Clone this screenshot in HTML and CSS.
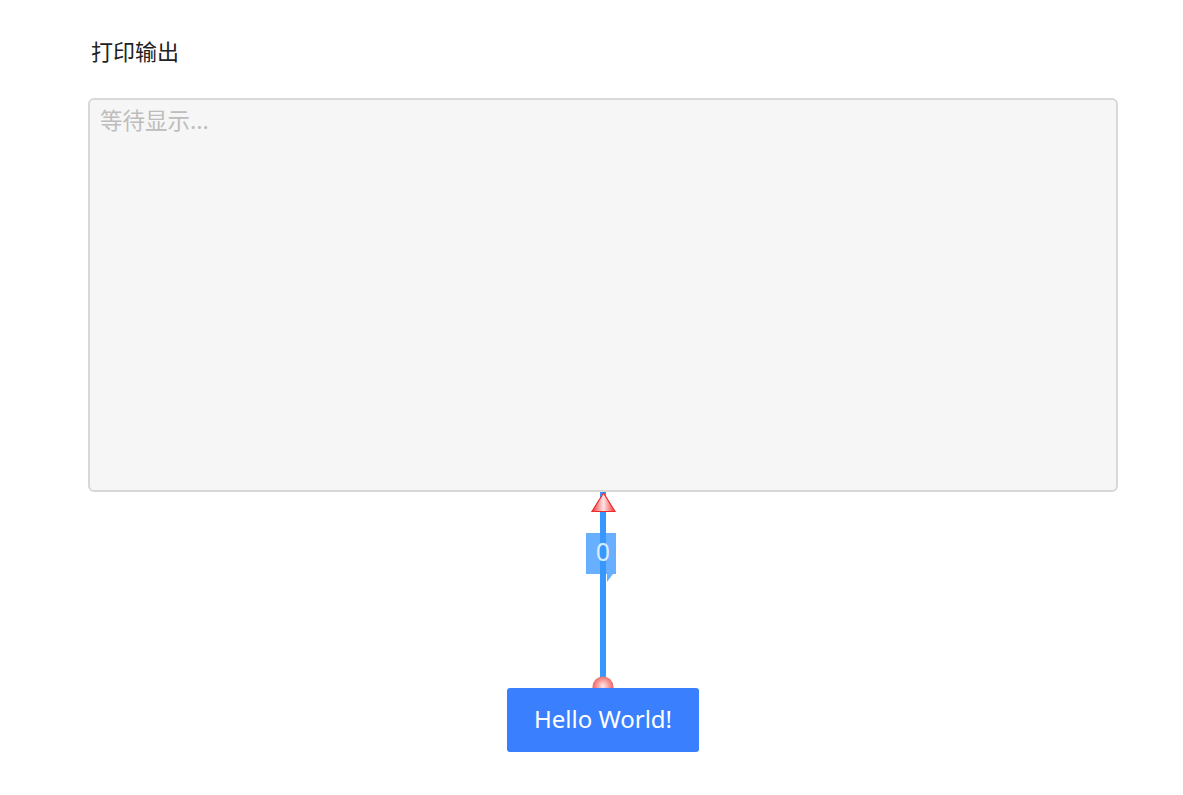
FILE: index.html
```html
<!DOCTYPE html>
<html lang="zh-CN">
<head>
<meta charset="utf-8">
<title>打印输出</title>
<link rel="stylesheet" href="styles.css">
</head>
<body>
<main class="page">
  <h1 class="title">打印输出</h1>
  <textarea class="output" placeholder="等待显示..." readonly></textarea>
  <div class="connector">
    <svg width="40" height="196" viewBox="0 0 40 196" aria-hidden="true">
      <defs>
        <linearGradient id="tri" x1="0" x2="1" y1="0" y2="0">
          <stop offset="0" stop-color="#f23a3a"/>
          <stop offset="0.5" stop-color="#ffe4e4"/>
          <stop offset="1" stop-color="#f23a3a"/>
        </linearGradient>
        <radialGradient id="dot" cx="0.5" cy="0.45" r="0.55">
          <stop offset="0" stop-color="#ffe6e6"/>
          <stop offset="1" stop-color="#ec5656"/>
        </radialGradient>
      </defs>
      <rect x="3" y="41" width="30" height="41" fill="#68b0ff"/>
      <polygon points="24,82 30,82 24,90" fill="#68b0ff"/>
      <rect x="17" y="0" width="6" height="192" fill="#3897ff"/>
      <polygon points="20.5,1 9,19.5 32,19.5" fill="url(#tri)" stroke="#ee2a2a" stroke-width="1.2"/>
      <text x="20" y="69" text-anchor="middle" class="count">0</text>
      <circle cx="20" cy="195" r="10.5" fill="url(#dot)"/>
    </svg>
  </div>
  <div class="actions">
    <button class="hello" type="button">Hello World!</button>
  </div>
</main>
</body>
</html>
```

FILE: styles.css
```css
html, body {
  margin: 0;
  padding: 0;
  background: #ffffff;
}

body {
  font-family: "Noto Sans", "Noto Sans CJK SC", sans-serif;
}

.page {
  width: 1030px;
  margin-left: 88px;
  padding-top: 35px;
  display: flex;
  flex-direction: column;
}

.title {
  margin: 0 0 32px 3px;
  font-family: "Noto Sans CJK SC", sans-serif;
  font-weight: 400;
  font-size: 22px;
  line-height: 31px;
  color: #222222;
}

.output {
  box-sizing: border-box;
  display: block;
  width: 1030px;
  height: 394px;
  margin: 0;
  padding: 3px 10px;
  border: 2px solid #d8d8d8;
  border-radius: 6px;
  background: #f6f6f6;
  resize: none;
  outline: none;
  font-family: "Noto Sans CJK SC", sans-serif;
  font-size: 22.5px;
  line-height: 32px;
  color: #333333;
}

.output::placeholder {
  color: #bdbdbd;
}

.connector {
  height: 196px;
  display: flex;
  justify-content: center;
}

.connector svg {
  display: block;
  overflow: hidden;
}

.count {
  font-family: "Noto Sans", sans-serif;
  font-size: 25px;
  fill: #d6eaff;
}

.actions {
  display: flex;
  justify-content: center;
}

.hello {
  width: 192px;
  height: 64px;
  padding: 0 0 4px 0;
  border: none;
  border-radius: 3px;
  background: #3a7ffe;
  color: #ffffff;
  font-family: "Noto Sans", sans-serif;
  font-size: 24px;
  cursor: pointer;
}
```
